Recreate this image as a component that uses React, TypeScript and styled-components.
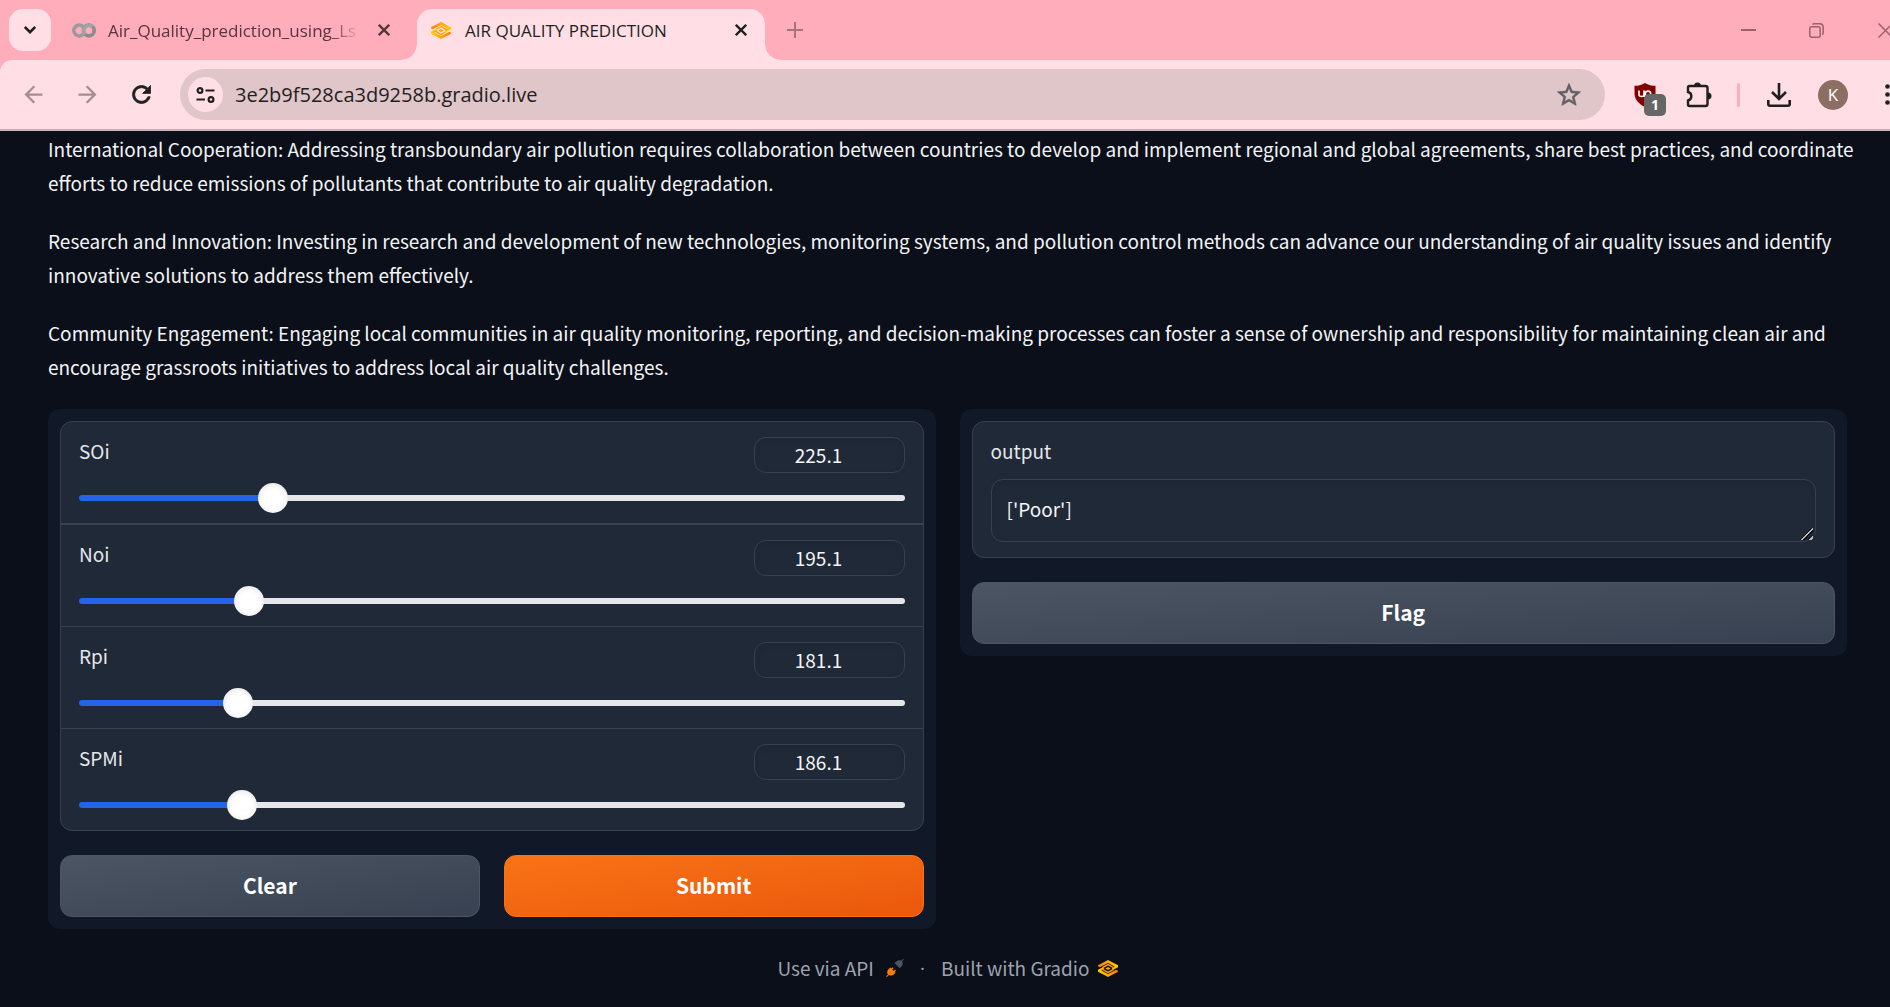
import React, { useId, useState } from "react";
import styled, { createGlobalStyle, css } from "styled-components";
import { MdArrowBack, MdArrowForward } from "react-icons/md";

const GlobalStyle = createGlobalStyle`
  *, *::before, *::after { box-sizing: border-box; }
  body { margin: 0; background: #0b0f19; }
  button, input, textarea { font: inherit; color: inherit; margin: 0; }
`;

const uiFont = `"Open Sans", "Noto Sans", sans-serif`;
const pageFont = `"Noto Sans CJK SC", "Noto Sans", sans-serif`;

/* ---------- browser window ---------- */

const Screen = styled.div`
  min-height: 100vh;
  overflow-x: hidden;
  background: #0b0f19;
`;

const Chrome = styled.header`
  margin-right: -30px;
  background: #ffacbb;
  font-family: ${uiFont};
  color: #1f1f1f;
`;

const TabStrip = styled.div`
  display: flex;
  height: 60px;
  padding: 9px 0 0 9px;
`;

const plainButton = css`
  display: inline-flex;
  align-items: center;
  justify-content: center;
  flex: none;
  padding: 0;
  border: 0;
  background: none;
  color: inherit;
`;

const TabSearch = styled.button`
  ${plainButton}
  width: 42px;
  height: 42px;
  border-radius: 14px;
  background: #ffdfe5;
`;

const Tab = styled.div<{ $active?: boolean }>`
  position: relative;
  display: flex;
  align-items: center;
  width: ${(p) => (p.$active ? 348 : 366)}px;
  padding: ${(p) => (p.$active ? "0 12px 9px 14px" : "0 21px 9px 21px")};
  gap: ${(p) => (p.$active ? 14 : 12)}px;
  color: ${(p) => (p.$active ? "#1f1f1f" : "#54363c")};
  ${(p) =>
    p.$active &&
    css`
      background: #ffdfe5;
      border-radius: 15px 15px 0 0;
      &::before,
      &::after {
        content: "";
        position: absolute;
        bottom: 0;
        width: 15px;
        height: 15px;
      }
      &::before {
        right: 100%;
        background: radial-gradient(circle at 0 0, transparent 14px, #ffdfe5 15px);
      }
      &::after {
        left: 100%;
        background: radial-gradient(circle at 100% 0, transparent 14px, #ffdfe5 15px);
      }
    `}
`;

const TabTitle = styled.button<{ $fade?: boolean }>`
  ${plainButton}
  flex: 1;
  min-width: 0;
  padding-top: 2px;
  justify-content: flex-start;
  white-space: nowrap;
  font-size: 17px;
  line-height: 26px;
  ${(p) => p.$fade && css`mask-image: linear-gradient(to right, #000 88%, transparent 100%);`}
`;

const IconButton = styled.button<{ $w?: number; $tone?: string }>`
  ${plainButton}
  width: ${(p) => p.$w ?? 24}px;
  color: ${(p) => p.$tone ?? "#1f1f1f"};
`;

const NewTab = styled(IconButton)`
  margin: 0 auto 9px 18px;
`;

const WindowButtons = styled.div`
  display: flex;
  height: 42px;
`;

const Toolbar = styled.div`
  display: flex;
  align-items: center;
  height: 71px;
  padding: 0 6px;
  border-bottom: 2px solid #c9b3b8;
  border-top-left-radius: 12px;
  background: #ffdfe5;
`;

const AddressBar = styled.form`
  display: flex;
  align-items: center;
  flex: 1;
  height: 51px;
  margin-left: 12px;
  padding: 0 22px 0 8px;
  border-radius: 26px;
  background: #e0c5c9;
`;

const SiteInfo = styled.button`
  ${plainButton}
  width: 35px;
  height: 35px;
  border-radius: 50%;
  background: #ffdfe5;
`;

const Url = styled.input`
  flex: 1;
  min-width: 0;
  padding: 0 12px;
  border: 0;
  outline: 0;
  background: none;
  font-size: 20px;
  line-height: 30px;
`;

const Shield = styled(IconButton)`
  position: relative;
  margin: 0 8px 0 28px;
`;

const Badge = styled.span`
  position: absolute;
  left: 11px;
  top: 11px;
  width: 22px;
  height: 22px;
  border-radius: 5px;
  background: #666;
  color: #fff;
  font-size: 14px;
  font-weight: 700;
  line-height: 22px;
  text-align: center;
`;

const ToolDivider = styled.span`
  width: 3px;
  height: 24px;
  margin: 0 12px 0 4px;
  border-radius: 2px;
  background: #ffacbb;
`;

const Avatar = styled.button`
  ${plainButton}
  width: 30px;
  height: 30px;
  margin: 0 12px;
  border-radius: 50%;
  background: #8d6e63;
  color: #fff;
  font-size: 17px;
`;

/* ---------- page ---------- */

const Page = styled.main`
  padding: 1px 43px 20px 48px;
  font-family: ${pageFont};
  font-size: 19px;
  color: #f3f4f6;
`;

const Article = styled.article`
  display: grid;
  gap: 24px;
  margin: 0 -12px 25px 0;
  line-height: 34px;
`;

const Prose = styled.p`
  margin: 0;
`;

const Columns = styled.div`
  display: grid;
  grid-template-columns: 1fr 1fr;
  align-items: start;
  gap: 24px;
`;

const Panel = styled.section`
  display: flex;
  flex-direction: column;
  gap: 24px;
  padding: 12px;
  border-radius: 12px;
  background: #111827;
`;

const Block = styled.div`
  border: 1px solid #374151;
  border-radius: 12px;
  background: #1f2937;
`;

const SliderRow = styled.div`
  padding: 15px 18px 10px;
  & + & {
    border-top: 1px solid #374151;
  }
  &:nth-child(2) {
    border-top-width: 2px;
  }
`;

const SliderHead = styled.div`
  display: flex;
  justify-content: space-between;
  margin-bottom: 10px;
`;

const Label = styled.label`
  display: block;
  line-height: 28px;
  color: #e5e7eb;
`;

const NumberBox = styled.input`
  width: 151px;
  height: 36px;
  padding: 0 8px 2px 2px;
  border: 1px solid #374151;
  border-radius: 12px;
  outline: 0;
  background: #1f2937;
  box-shadow: inset 0 3px 6px rgba(0, 0, 0, 0.06);
  text-align: center;
  line-height: 30px;
`;

const Range = styled.input<{ $fill: number }>`
  display: block;
  width: 100%;
  height: 30px;
  appearance: none;
  background: none;
  outline: 0;
  &::-webkit-slider-runnable-track {
    height: 6px;
    border-radius: 3px;
    background: linear-gradient(to right, #2563eb ${(p) => p.$fill}%, #e5e7eb ${(p) => p.$fill}%);
  }
  &::-webkit-slider-thumb {
    appearance: none;
    width: 30px;
    height: 30px;
    margin-top: -12px;
    border-radius: 50%;
    background: #fff;
    box-shadow: inset 0 1px 6px rgba(0, 0, 0, 0.12);
  }
`;

const Actions = styled.div`
  display: grid;
  grid-auto-flow: column;
  grid-auto-columns: 1fr;
  gap: 24px;
`;

const Button = styled.button<{ $primary?: boolean }>`
  height: 62px;
  padding: 0 12px 2px;
  border: 1px solid ${(p) => (p.$primary ? "#f97316" : "#4b5563")};
  border-radius: 12px;
  background: ${(p) =>
    p.$primary
      ? "linear-gradient(to bottom right, #f97316, #ea580c)"
      : "linear-gradient(to bottom right, #4b5563, #374151)"};
  color: #fff;
  font-size: 21px;
  font-weight: 700;
  line-height: 32px;
`;

const OutputBlock = styled(Block)`
  padding: 15px 18px;
`;

const OutputText = styled.textarea`
  display: block;
  width: 100%;
  height: 63px;
  margin-top: 14px;
  padding: 14px 15px;
  border: 1px solid #374151;
  border-radius: 12px;
  outline: 0;
  background: #1f2937;
  box-shadow: inset 0 3px 6px rgba(0, 0, 0, 0.06);
  line-height: 30px;
  resize: vertical;
  &::-webkit-resizer {
    background: linear-gradient(
        135deg,
        transparent 43%,
        #111 43% 48%,
        #bbb 48% 58%,
        #111 58% 63%,
        transparent 63% 76%,
        #111 76% 80%,
        #bbb 80% 92%,
        transparent 92%
      )
      1px 2px / 12px 12px no-repeat;
  }
`;

const Footer = styled.footer`
  display: flex;
  align-items: center;
  justify-content: center;
  gap: 16px;
  margin-top: 23px;
  line-height: 32px;
  color: #9ca3af;
`;

const Separator = styled.span`
  font-family: ${uiFont};
`;

const FooterLink = styled.a<{ $gap: number }>`
  display: inline-flex;
  align-items: center;
  gap: ${(p) => p.$gap}px;
  color: inherit;
  text-decoration: none;
`;

/* ---------- drawings ---------- */

const GradioLogo = () => {
  const id = useId();
  return (
    <svg width="20" height="17" viewBox="0 0 20 17" fill="none" aria-hidden="true">
      <defs>
        <linearGradient id={id + "a"} x1="0" y1="0" x2="20" y2="0" gradientUnits="userSpaceOnUse">
          <stop stopColor="#ff7c00" />
          <stop offset="1" stopColor="#ffd000" />
        </linearGradient>
        <linearGradient id={id + "b"} x1="20" y1="0" x2="0" y2="0" gradientUnits="userSpaceOnUse">
          <stop stopColor="#ff7c00" />
          <stop offset="1" stopColor="#ffd000" />
        </linearGradient>
      </defs>
      <path d="M10 0 20 5.3V7.2L15.6 9.6 13.6 8.4 16.6 6.4 10 2.9 3.6 6.3 1.8 7.2 0 6.3V5.3Z" fill={`url(#${id}a)`} />
      <path d="M10 17 0 11.7V9.8L4.4 7.4 6.4 8.6 3.4 10.6 10 14.1 16.4 10.7 18.2 9.8 20 10.7V11.7Z" fill={`url(#${id}b)`} />
      <path d="M4.4 7.6 10 4.6 15.6 7.6" stroke={`url(#${id}b)`} strokeWidth="1.3" />
      <path d="M4.4 9.4 10 12.4 15.6 9.4" stroke={`url(#${id}a)`} strokeWidth="1.3" />
      <path d="M10 6.9 12.7 8.5 10 10.1 7.3 8.5Z" fill="#ff9a00" />
    </svg>
  );
};

const ColabLogo = () => (
  <svg width="24" height="15" viewBox="0 0 24 15" fill="none" strokeWidth="3.6" aria-hidden="true">
    <path d="M11 3.6A5.4 5.4 0 1 0 11 11.4" stroke="#9a9a9f" />
    <circle cx="16.8" cy="7.5" r="5.4" stroke="#8a8b90" />
    <path d="M13 11.3A5.4 5.4 0 0 1 20.6 3.7" stroke="#a3a4a8" />
  </svg>
);

const CloseIcon = () => (
  <svg width="12" height="12" viewBox="0 0 12 12" stroke="currentColor" strokeWidth="2.3" aria-hidden="true">
    <path d="M.8.8 11.2 11.2M11.2.8.8 11.2" />
  </svg>
);

const ReloadIcon = () => (
  <svg width="27" height="27" viewBox="0 0 24 24" fill="currentColor" stroke="currentColor" strokeWidth=".7" aria-hidden="true">
    <path d="M17.65 6.35C16.2 4.9 14.21 4 12 4c-4.42 0-7.99 3.58-7.99 8s3.57 8 7.99 8c3.73 0 6.84-2.55 7.73-6h-2.08c-.82 2.33-3.04 4-5.65 4-3.31 0-6-2.69-6-6s2.69-6 6-6c1.66 0 3.14.69 4.22 1.78L13 11h7V4l-2.35 2.35z" />
  </svg>
);

const StarIcon = () => (
  <svg width="28" height="28" viewBox="0 0 24 24" fill="currentColor" stroke="currentColor" strokeWidth=".5" aria-hidden="true">
    <path d="m22 9.24-7.19-.62L12 2 9.19 8.63 2 9.24l5.46 4.73L5.82 21 12 17.27 18.18 21l-1.63-7.03L22 9.24zM12 15.4l-3.76 2.27 1-4.28-3.32-2.88 4.38-.38L12 6.1l1.71 4.04 4.38.38-3.32 2.88 1 4.28L12 15.4z" />
  </svg>
);

const PlugIcon = () => (
  <svg width="18" height="18" viewBox="0 0 18 18" aria-hidden="true">
    <path d="M0 17.4 2 15.5C.7 13.6 1 12 2.5 10.200L4.200 8.400 5.300 9.500 6.600 8.200 7.600 9.200 6.300 10.500 7.700 11.900 9 10.600 10 11.600 8.700 12.900 9.600 13.800 8 15.300C6.300 16.700 4.500 16.900 2.900 16L1 18Z" fill="#ff7c00" />
    <path d="M17.800.4 16 2.300C17.300 4 17 5.900 15.500 7.500L13.700 9.300 8.500 4.100 10.300 2.400C12 1 13.700.8 15.200 1.600L17 0Z" fill="#4b5563" />
  </svg>
);

/* ---------- sections ---------- */

const BrowserChrome = () => (
  <Chrome>
    <TabStrip>
      <TabSearch aria-label="Search tabs">
        <svg width="12" height="8" viewBox="0 0 12 8" fill="none" stroke="currentColor" strokeWidth="2.6">
          <path d="M.8 1 6 6.200 11.200 1" />
        </svg>
      </TabSearch>
      <Tab>
        <ColabLogo />
        <TabTitle $fade>Air_Quality_prediction_using_Ls</TabTitle>
        <IconButton $tone="#54363c" aria-label="Close tab">
          <CloseIcon />
        </IconButton>
      </Tab>
      <Tab $active>
        <GradioLogo />
        <TabTitle>AIR QUALITY PREDICTION</TabTitle>
        <IconButton aria-label="Close tab">
          <CloseIcon />
        </IconButton>
      </Tab>
      <NewTab $tone="#a5747c" aria-label="New tab">
        <svg width="16" height="16" viewBox="0 0 16 16" stroke="currentColor" strokeWidth="2">
          <path d="M0 8H16M8 0V16" />
        </svg>
      </NewTab>
      <WindowButtons>
        <IconButton $w={68} $tone="#9b626c" aria-label="Minimize">
          <svg width="15" height="2">
            <rect width="15" height="2" fill="currentColor" />
          </svg>
        </IconButton>
        <IconButton $w={68} $tone="#9b626c" aria-label="Restore">
          <svg width="15" height="15" viewBox="0 0 15 15" fill="none" stroke="currentColor" strokeWidth="1.500">
            <rect x=".8" y="3.800" width="10.400" height="10.400" rx="2" />
            <path d="M3.500 1.600Q4.200.8 5.500.8H10.500Q14.200.8 14.200 4.500V9.500Q14.200 11 13.300 11.600" />
          </svg>
        </IconButton>
        <IconButton $w={70} $tone="#9b626c" aria-label="Close window">
          <svg width="15" height="15" viewBox="0 0 15 15" stroke="currentColor" strokeWidth="1.500">
            <path d="M.5.5 14.500 14.500M14.500.5.5 14.500" />
          </svg>
        </IconButton>
      </WindowButtons>
    </TabStrip>
    <Toolbar>
      <IconButton $w={54} $tone="#a38d92" aria-label="Back">
        <MdArrowBack size={27} />
      </IconButton>
      <IconButton $w={54} $tone="#a38d92" aria-label="Forward">
        <MdArrowForward size={27} />
      </IconButton>
      <IconButton $w={54} aria-label="Reload">
        <ReloadIcon />
      </IconButton>
      <AddressBar onSubmit={(e) => e.preventDefault()}>
        <SiteInfo type="button" aria-label="Site information">
          <svg width="19" height="16" viewBox="0 0 19 16" fill="none" stroke="currentColor" strokeWidth="2.200">
            <circle cx="4" cy="3.500" r="2.400" />
            <path d="M9.500 3.500H18.500M.5 12.500H9" />
            <circle cx="15" cy="12.500" r="2.400" />
          </svg>
        </SiteInfo>
        <Url aria-label="Address" defaultValue="3e2b9f528ca3d9258b.gradio.live" />
        <IconButton $w={28} $tone="#5f5f62" type="button" aria-label="Bookmark this page">
          <StarIcon />
        </IconButton>
      </AddressBar>
      <Shield aria-label="uBlock Origin">
        <svg width="22" height="24" viewBox="0 0 22 24" fill="none">
          <path d="M11 0C14 2 18 2.800 21.500 2.800V10C21.500 16 18 20.500 11 24 4 20.500.5 16 .5 10V2.800C4 2.800 8 2 11 0Z" fill="#800000" />
          <path d="M5 7.500V11.500Q5 13.500 7.500 13.500T10 11.500V7.500M10.500 7.500V14" stroke="#fff" strokeWidth="1.600" />
          <circle cx="14" cy="10.800" r="2.700" stroke="#fff" strokeWidth="1.600" />
        </svg>
        <Badge>1</Badge>
      </Shield>
      <IconButton $w={68} aria-label="Extensions">
        <svg width="26" height="26" viewBox="0 0 26 26" fill="none">
          <path
            d="M3.500 4H19.500Q21.500 4 21.500 6V22Q21.500 24 19.500 24H3.500Q2 24 2 22.500V18.500C6.500 17.500 6.500 11 2 10V5.500Q2 4 3.500 4Z"
            stroke="currentColor"
            strokeWidth="2.400"
          />
          <path d="M8 4A3.500 3.500 0 0 1 15 4ZM22 10.500A3.500 3.500 0 0 1 22 17.500Z" fill="currentColor" />
        </svg>
      </IconButton>
      <ToolDivider />
      <IconButton $w={54} aria-label="Downloads">
        <svg width="24" height="24" viewBox="0 0 24 24" fill="none" stroke="currentColor" strokeWidth="2.600">
          <path d="M12 0V15M5 9 12 16 19 9M1.300 17V21Q1.300 22.700 3 22.700H21Q22.700 22.700 22.700 21V17" />
        </svg>
      </IconButton>
      <Avatar aria-label="Profile">K</Avatar>
      <IconButton $w={54} aria-label="Menu">
        <svg width="5" height="21" viewBox="0 0 5 21" fill="currentColor">
          <circle cx="2.500" cy="2.500" r="2.300" />
          <circle cx="2.500" cy="10.500" r="2.300" />
          <circle cx="2.500" cy="18.500" r="2.300" />
        </svg>
      </IconButton>
    </Toolbar>
  </Chrome>
);

const SliderField = ({ name, initial }: { name: string; initial: number }) => {
  const id = useId();
  const [value, setValue] = useState(initial);
  const change = (e: React.ChangeEvent<HTMLInputElement>) => setValue(Number(e.target.value));
  return (
    <SliderRow>
      <SliderHead>
        <Label htmlFor={id}>{name}</Label>
        <NumberBox
          id={id}
          type="number"
          min={0.1}
          max={1000.1}
          step={1}
          value={value}
          onChange={change}
        />
      </SliderHead>
      <Range
        type="range"
        aria-label={`range slider for ${name}`}
        min={0.1}
        max={1000.1}
        step={1}
        value={value}
        onChange={change}
        $fill={value / 10}
      />
    </SliderRow>
  );
};

const advice = [
  "International Cooperation: Addressing transboundary air pollution requires collaboration between countries to develop and implement regional and global agreements, share best practices, and coordinate efforts to reduce emissions of pollutants that contribute to air quality degradation.",
  "Research and Innovation: Investing in research and development of new technologies, monitoring systems, and pollution control methods can advance our understanding of air quality issues and identify innovative solutions to address them effectively.",
  "Community Engagement: Engaging local communities in air quality monitoring, reporting, and decision-making processes can foster a sense of ownership and responsibility for maintaining clean air and encourage grassroots initiatives to address local air quality challenges.",
];

const fields = [
  { name: "SOi", initial: 225.1 },
  { name: "Noi", initial: 195.1 },
  { name: "Rpi", initial: 181.1 },
  { name: "SPMi", initial: 186.1 },
];

export default function App() {
  return (
    <Screen>
      <GlobalStyle />
      <BrowserChrome />
      <Page>
        <Article>
          {advice.map((text) => (
            <Prose key={text}>{text}</Prose>
          ))}
        </Article>
        <Columns>
          <Panel>
            <Block>
              {fields.map((f) => (
                <SliderField key={f.name} {...f} />
              ))}
            </Block>
            <Actions>
              <Button>Clear</Button>
              <Button $primary>Submit</Button>
            </Actions>
          </Panel>
          <Panel>
            <OutputBlock>
              <Label htmlFor="output">output</Label>
              <OutputText id="output" rows={1} defaultValue="['Poor']" />
            </OutputBlock>
            <Button>Flag</Button>
          </Panel>
        </Columns>
        <Footer>
          <FooterLink href="#api" $gap={12}>
            Use via API <PlugIcon />
          </FooterLink>
          <Separator>·</Separator>
          <FooterLink href="#gradio" $gap={8}>
            Built with Gradio <GradioLogo />
          </FooterLink>
        </Footer>
      </Page>
    </Screen>
  );
}
